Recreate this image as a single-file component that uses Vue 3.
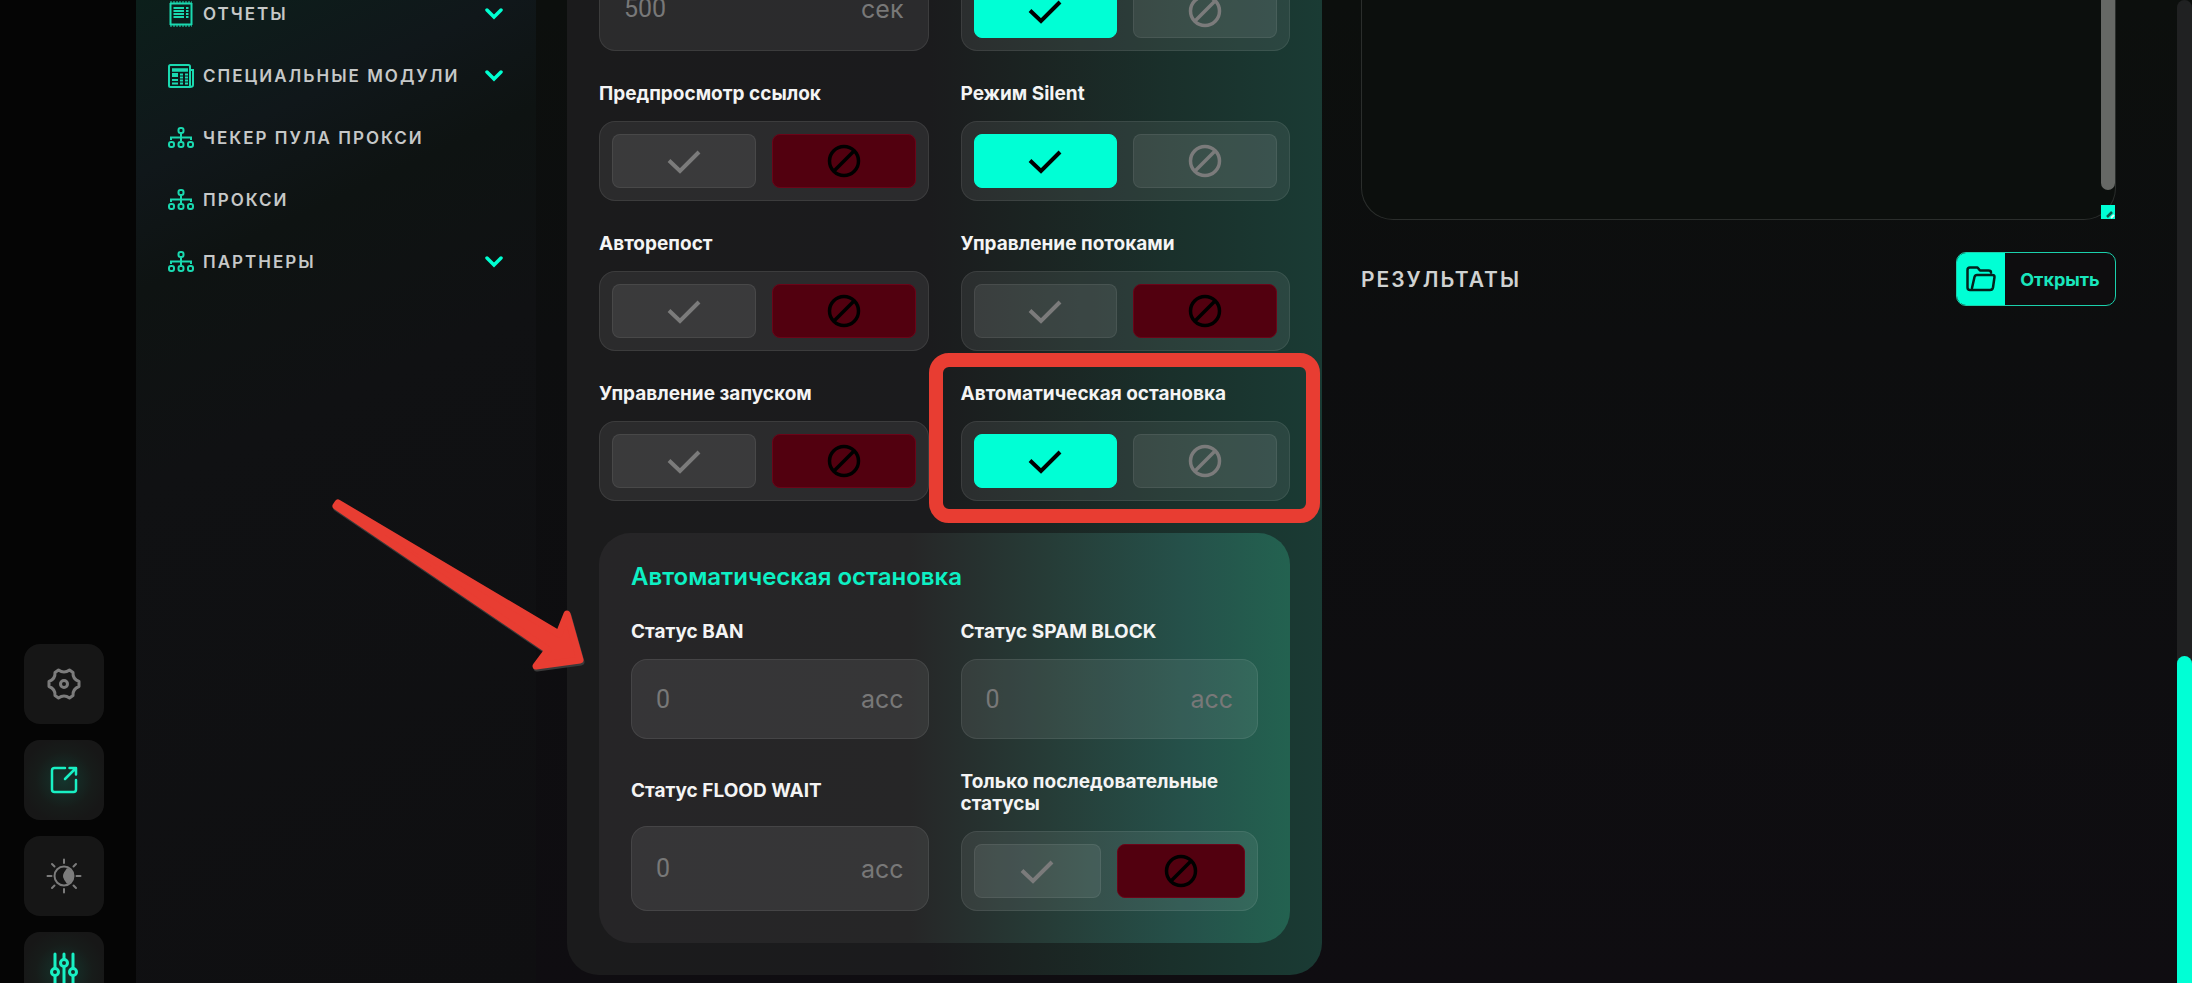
<script setup>
import { reactive, ref } from 'vue'

const menu = [
  { title: 'Отчеты', icon: 'report', more: true },
  { title: 'Специальные модули', icon: 'news', more: true },
  { title: 'Чекер пула прокси', icon: 'tree', more: false },
  { title: 'Прокси', icon: 'tree', more: false },
  { title: 'Партнеры', icon: 'tree', more: true }
]

const switches = reactive([
  { id: 'preview', title: 'Предпросмотр ссылок', on: false },
  { id: 'silent', title: 'Режим Silent', on: true },
  { id: 'repost', title: 'Авторепост', on: false },
  { id: 'threads', title: 'Управление потоками', on: false },
  { id: 'launch', title: 'Управление запуском', on: false },
  { id: 'autostop', title: 'Автоматическая остановка', on: true, marked: true }
])

const first = ref(true)
const sequential = ref(false)
</script>

<template>
  <div class="app">
    <aside class="rail" aria-label="Быстрые действия">
      <button class="rail-btn" type="button" aria-label="Настройки">
        <svg width="34" height="34" viewBox="0 0 34 34" fill="none" stroke="currentColor" stroke-width="3" stroke-linejoin="round">
          <path d="M11.500 3 Q17 7 22.500 3 L26 5.500 Q25.500 12 32 14.500 V19.500 Q25.500 22 26 28.500 L22.500 31 Q17 27 11.500 31 L8 28.500 Q8.500 22 2 19.500 V14.500 Q8.500 12 8 5.500 Z" />
          <circle cx="17" cy="17" r="3.500" />
        </svg>
      </button>
      <button class="rail-btn active" type="button" aria-label="Открыть в новом окне">
        <svg width="34" height="34" viewBox="0 0 34 34" fill="none" stroke="currentColor" stroke-width="2.500" stroke-linecap="round" stroke-linejoin="round">
          <path d="M18 5 H7.500 Q5 5 5 7.500 V26.500 Q5 29 7.500 29 H26.500 Q29 29 29 26.500 V17" />
          <path d="M18 16 L28.500 5.500 M22.500 5 H29 V11.500" />
        </svg>
      </button>
      <button class="rail-btn" type="button" aria-label="Тема">
        <svg width="36" height="36" viewBox="0 0 36 36" fill="none" stroke="currentColor" stroke-width="2">
          <circle cx="18" cy="18" r="9.500" />
          <circle cx="22.500" cy="18" r="5.500" fill="currentColor" stroke="none" />
          <path d="M21 10 Q14 18 21 26 Q27 24 27 18 Q27 12 21 10 Z" fill="currentColor" stroke="none" />
          <path stroke-linecap="round" d="M18 1.500 V5 M18 31 V34.500 M1.500 18 H5.500 M30.500 18 H34.500 M6 6 L8.500 8.500 M27.500 27.500 L30 30 M6 30 L8.500 27.500 M27.500 8.500 L30 6" />
        </svg>
      </button>
      <button class="rail-btn active" type="button" aria-label="Параметры">
        <svg width="34" height="40" viewBox="0 0 34 40" fill="none" stroke="currentColor" stroke-width="3" stroke-linecap="round">
          <path d="M8 2 V16 M8 24 V38 M17 2 V7 M17 15 V38 M26 2 V16 M26 24 V38" />
          <circle cx="8" cy="20" r="3.500" />
          <circle cx="17" cy="11" r="3.500" />
          <circle cx="26" cy="20" r="3.500" />
        </svg>
      </button>
    </aside>

    <nav class="menu">
      <ul>
        <li v-for="item in menu" :key="item.title">
          <a href="#" class="menu-link">
            <svg v-if="item.icon === 'report'" class="menu-icon" viewBox="0 0 26 26" fill="none" stroke="currentColor">
              <path stroke-width="2" d="M2.500 2 V24 M23.500 2 V24" />
              <path stroke-width="2" d="M2 2.500 H24 M2 23.500 H24" />
              <path stroke-width="1" stroke-dasharray="2 1" d="M2 1 H24 M2 25 H24" />
              <path stroke-width="2" d="M5.500 7 H16 M5.500 10 H16 M5.500 13 H16 M5.500 16 H16 M18 7 H20.500 M18 10 H20.500 M18 13 H20.500 M18 16 H20.500" />
            </svg>
            <svg v-else-if="item.icon === 'news'" class="menu-icon" viewBox="0 0 26 26" fill="none" stroke="currentColor">
              <rect x="1" y="2" width="21" height="22" rx="1.500" stroke-width="2" />
              <path stroke-width="2" d="M22 7 H25 V22 Q25 24 22 24 H18" />
              <path stroke-width="3.500" d="M4 7 H20" />
              <path stroke-width="4" d="M4 12 H10" />
              <path stroke-width="2" d="M4 17 H10 M4 20.500 H10 M12 11.500 H15 M12 14.500 H15 M12 17.500 H15 M12 20.500 H15 M17 11.500 H20 M17 14.500 H20 M17 17.500 H20 M17 20.500 H20" />
            </svg>
            <svg v-else class="menu-icon" viewBox="0 0 26 26" fill="none" stroke="currentColor" stroke-width="2">
              <rect x="10.500" y="3" width="5" height="5" rx="2" />
              <path d="M13 8.500 V16 M3 15 V12.500 H23 V15" />
              <rect x="1" y="17" width="5" height="5" rx="2" />
              <rect x="10.500" y="17" width="5" height="5" rx="2" />
              <rect x="20" y="17" width="5" height="5" rx="2" />
            </svg>
            <span>{{ item.title }}</span>
            <svg v-if="item.more" class="chevron" viewBox="0 0 20 12" fill="none" stroke="currentColor" stroke-width="3.500" stroke-linecap="round">
              <path d="M3 2 L10 9 L17 2" />
            </svg>
          </a>
        </li>
      </ul>
    </nav>

    <main class="content">
      <section class="panel">
        <div class="grid">
          <div class="field">
            <div class="input-box tall">
              <input type="text" placeholder="500" aria-label="Интервал" />
              <span class="unit">сек</span>
            </div>
          </div>
          <div class="field end">
            <div class="switch" role="group" aria-label="Режим">
              <button type="button" class="yes" :class="{ chosen: first }" aria-label="Вкл" @click="first = true">
                <svg class="ico" viewBox="0 0 34 34"><path d="M2 16.500 L13 27 L32 8" /></svg>
              </button>
              <button type="button" class="no" :class="{ chosen: !first }" aria-label="Выкл" @click="first = false">
                <svg class="ico" viewBox="0 0 34 34"><circle cx="17" cy="17" r="14.500" /><path d="M7 27 L27 7" /></svg>
              </button>
            </div>
          </div>

          <div v-for="s in switches" :key="s.id" class="field">
            <h3 :id="s.id" class="label">{{ s.title }}</h3>
            <div class="switch" role="group" :aria-labelledby="s.id">
              <button type="button" class="yes" :class="{ chosen: s.on }" aria-label="Вкл" @click="s.on = true">
                <svg class="ico" viewBox="0 0 34 34"><path d="M2 16.500 L13 27 L32 8" /></svg>
              </button>
              <button type="button" class="no" :class="{ chosen: !s.on }" aria-label="Выкл" @click="s.on = false">
                <svg class="ico" viewBox="0 0 34 34"><circle cx="17" cy="17" r="14.500" /><path d="M7 27 L27 7" /></svg>
              </button>
            </div>
            <span v-if="s.marked" class="marker"></span>
          </div>
        </div>

        <section class="subpanel">
          <h2 class="subtitle">Автоматическая остановка</h2>
          <div class="grid">
            <div class="field">
              <label class="label" for="ban">Статус BAN</label>
              <div class="input-box">
                <input id="ban" type="text" placeholder="0" />
                <span class="unit">асс</span>
              </div>
            </div>
            <div class="field">
              <label class="label" for="spam">Статус SPAM BLOCK</label>
              <div class="input-box">
                <input id="spam" type="text" placeholder="0" />
                <span class="unit">асс</span>
              </div>
            </div>
            <div class="field">
              <label class="label grow" for="flood">Статус FLOOD WAIT</label>
              <div class="input-box tall">
                <input id="flood" type="text" placeholder="0" />
                <span class="unit">асс</span>
              </div>
            </div>
            <div class="field">
              <h3 id="sequential" class="label">Только последовательные статусы</h3>
              <div class="switch" role="group" aria-labelledby="sequential">
                <button type="button" class="yes" :class="{ chosen: sequential }" aria-label="Вкл" @click="sequential = true">
                  <svg class="ico" viewBox="0 0 34 34"><path d="M2 16.500 L13 27 L32 8" /></svg>
                </button>
                <button type="button" class="no" :class="{ chosen: !sequential }" aria-label="Выкл" @click="sequential = false">
                  <svg class="ico" viewBox="0 0 34 34"><circle cx="17" cy="17" r="14.500" /><path d="M7 27 L27 7" /></svg>
                </button>
              </div>
            </div>
          </div>
          <svg class="arrow" width="260" height="180" viewBox="0 0 260 180">
            <path d="M8 6 L229 137 L237 117 L250 163 L206 169 L218 153 L6 9 Z" fill="#e83d32" stroke="#e83d32" stroke-width="7" stroke-linejoin="round" />
          </svg>
        </section>
      </section>

      <section class="side">
        <div class="log">
          <textarea aria-label="Журнал"></textarea>
          <span class="log-thumb"></span>
          <svg class="log-grip" viewBox="0 0 14 14"><path d="M6 12 L11 7" stroke="#0b5b4b" stroke-width="2.500" /><path d="M10 13 L13 10" stroke="#d8fff6" stroke-width="2" /></svg>
        </div>
        <div class="results">
          <h2>Результаты</h2>
          <button type="button" class="open">
            <span class="open-icon">
              <svg width="30" height="26" viewBox="0 0 30 26" fill="none" stroke="#03231d" stroke-width="2.500" stroke-linejoin="round" stroke-linecap="round">
                <path d="M25 6.500 Q25 4.500 22.500 4.500 H14 L11.500 1.500 H4 Q1.500 1.500 1.500 4 V21.500 Q1.500 24 4 24 H24 Q26.500 24 27 21.500 L28.500 11 Q28.500 9 26.500 9 H11 Q9 9 8.500 11 L6 22" />
              </svg>
            </span>
            <span class="open-text">Открыть</span>
          </button>
        </div>
      </section>
    </main>

    <div class="page-track"><div class="page-thumb"></div></div>
  </div>
</template>

<style>
body {
  background: #0d0d0f;
}
</style>

<style scoped>
.app {
  display: grid;
  grid-template-columns: 136px 400px minmax(0, 1fr) 15px;
  height: 100vh;
  overflow: hidden;
  font-family: Inter, "Noto Sans", sans-serif;
  color: #f4f4f4;
  background: linear-gradient(180deg, #0c0f0d 0%, #0d0e0f 35%, #0f0d11 100%);
}
.app * {
  box-sizing: border-box;
}
button {
  font: inherit;
  padding: 0;
  cursor: pointer;
}
h2,
h3 {
  margin: 0;
}

.rail {
  display: flex;
  flex-direction: column;
  justify-content: flex-end;
  align-items: flex-start;
  gap: 16px;
  padding-left: 24px;
  margin-bottom: -29px;
  min-height: 0;
  background: #050505;
}
.rail-btn {
  display: flex;
  flex: none;
  align-items: center;
  justify-content: center;
  width: 80px;
  height: 80px;
  border: 0;
  border-radius: 16px;
  background: #161616;
  color: #7c7c7c;
}
.rail-btn.active {
  color: #19f0c4;
  background: radial-gradient(circle, #14352d 0%, #171c1a 50%, #171717 75%);
}

.menu {
  background: linear-gradient(155deg, #0c1f1b 0%, #10171a 15%, #0e1312 25%, #101113 42%, #0f0f11 100%);
}
.menu ul {
  list-style: none;
  margin: -17px 0 0;
  padding: 0 32px;
}
.menu-link {
  display: flex;
  align-items: center;
  gap: 9px;
  height: 62px;
  color: #c6c8c8;
  font-size: 17px;
  font-weight: 600;
  letter-spacing: 2px;
  text-transform: uppercase;
  text-decoration: none;
  white-space: nowrap;
}
.menu-icon {
  flex: none;
  width: 26px;
  height: 26px;
  color: #1ad9b0;
}
.chevron {
  width: 20px;
  height: 12px;
  margin-left: auto;
  color: #00ffd1;
}

.content {
  display: grid;
  grid-template-columns: minmax(0, 1fr) minmax(0, 1fr);
  align-items: start;
  gap: 39px;
  padding: 0 61px 0 31px;
}
.panel {
  margin-top: -66px;
  padding: 32px;
  border-radius: 32px;
  background: linear-gradient(90deg, #1b1b1c 0%, #1b1b1d 48%, #1b2422 62%, #1a302b 80%, #1a3b34 100%);
}
.grid {
  display: grid;
  grid-template-columns: minmax(0, 1fr) minmax(0, 1fr);
  gap: 32px;
}
.field {
  position: relative;
  display: flex;
  flex-direction: column;
  gap: 16px;
}
.field.end {
  justify-content: flex-end;
}
.label {
  font-size: 19px;
  line-height: 22px;
  font-weight: 700;
}
.label.grow {
  display: flex;
  flex: 1;
  align-items: center;
}
.switch,
.input-box {
  display: flex;
  height: 80px;
  border: 1px solid rgba(255, 255, 255, 0.08);
  border-radius: 16px;
  background: rgba(255, 255, 255, 0.075);
}
.switch {
  gap: 16px;
  padding: 12px;
}
.switch button {
  display: flex;
  flex: 1;
  align-items: center;
  justify-content: center;
  border: 1px solid rgba(255, 255, 255, 0.07);
  border-radius: 8px;
  background: rgba(255, 255, 255, 0.075);
  color: #7b7b7b;
}
.switch .yes.chosen {
  border-color: #00ffd5;
  background: #00ffd5;
  color: #000;
}
.switch .no.chosen {
  border-color: #6b0418;
  background: #52000f;
  color: #000;
}
.ico {
  width: 34px;
  height: 34px;
  fill: none;
  stroke: currentColor;
  stroke-width: 4;
}
.no .ico {
  stroke-width: 3.5;
}
.input-box {
  align-items: center;
  padding: 0 24px;
}
.input-box.tall {
  height: 85px;
}
.input-box input {
  flex: 1;
  min-width: 0;
  padding: 0;
  border: 0;
  outline: 0;
  background: none;
  color: #fff;
  font-family: Roboto, sans-serif;
  font-size: 25px;
}
.input-box input::placeholder {
  color: #787878;
  opacity: 1;
}
.unit {
  color: #787878;
  font-size: 25px;
}
.marker {
  position: absolute;
  inset: -30px -30px -22px -32px;
  border: 14px solid #e83d32;
  border-radius: 20px;
  pointer-events: none;
}

.subpanel {
  position: relative;
  margin-top: 32px;
  padding: 32px;
  border-radius: 32px;
  background: linear-gradient(90deg, #262527 0%, #262627 45%, #263c37 65%, #25514a 85%, #236250 100%);
}
.subtitle {
  margin-bottom: 32px;
  color: #0df0c4;
  font-size: 24px;
  line-height: 24px;
  font-weight: 600;
}
.arrow {
  position: absolute;
  top: -36px;
  left: -269px;
  filter: drop-shadow(1px 2px 0 #3a3a3a);
  pointer-events: none;
}

.log {
  position: relative;
  height: 220px;
}
.log textarea {
  display: block;
  width: 100%;
  height: 100%;
  border: 1px solid #2b2e2c;
  border-top: 0;
  border-radius: 0 0 32px 32px;
  background: #0c0f0d;
  color: #fff;
  outline: 0;
  resize: none;
}
.log-thumb {
  position: absolute;
  top: 0;
  right: 1px;
  width: 14px;
  height: 190px;
  border-radius: 0 0 7px 7px;
  background: #666865;
}
.log-grip {
  position: absolute;
  right: 1px;
  bottom: 1px;
  width: 14px;
  height: 14px;
  background: #00ffd5;
}
.results {
  display: flex;
  align-items: center;
  justify-content: space-between;
  margin-top: 32px;
}
.results h2 {
  color: #d0d2d1;
  font-size: 21px;
  font-weight: 600;
  letter-spacing: 2px;
  text-transform: uppercase;
}
.open {
  display: flex;
  width: 160px;
  height: 54px;
  overflow: hidden;
  border: 1px solid #1bd0ac;
  border-radius: 10px;
  background: #0e0d0f;
  color: #19e6bd;
  font-size: 18px;
  font-weight: 700;
}
.open-icon {
  display: flex;
  align-items: center;
  justify-content: center;
  width: 48px;
  height: 100%;
  background: #00ffd5;
}
.open-text {
  flex: 1;
  align-self: center;
  text-align: center;
}

.page-track {
  display: flex;
  flex-direction: column;
  justify-content: flex-end;
  border-radius: 8px 8px 0 0;
  background: #202122;
}
.page-thumb {
  height: 33.3%;
  border-radius: 8px 8px 0 0;
  background: #00ffd5;
}
</style>
